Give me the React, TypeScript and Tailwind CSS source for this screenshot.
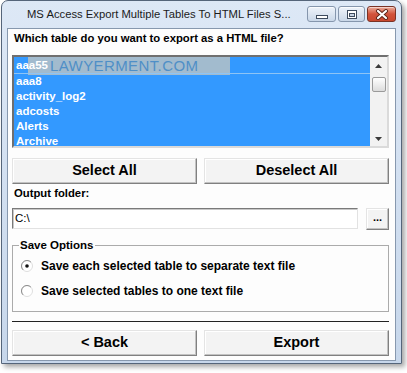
import clsx from 'clsx';

const tables = ['aaa55', 'aaa8', 'activity_log2', 'adcosts', 'Alerts', 'Archive'];

function CaptionButton({ kind }: { kind: 'min' | 'max' | 'close' }) {
  if (kind === 'close') {
    return (
      <div className="flex h-[16px] w-[29px] items-center justify-center rounded-[3px] border border-[#7a3326] bg-gradient-to-b from-[#e9ab9a] via-[#d2533b] to-[#c8482f] shadow-[inset_0_1px_0_rgba(255,255,255,0.5)]">
        <svg width="14" height="11" viewBox="0 0 14 11">
          <path d="M3 2 L11 9 M11 2 L3 9" stroke="#5a2418" strokeWidth="4" strokeLinecap="round" />
          <path d="M3 2 L11 9 M11 2 L3 9" stroke="#ffffff" strokeWidth="2.2" strokeLinecap="round" />
        </svg>
      </div>
    );
  }
  return (
    <div
      className={clsx(
        'flex h-[16px] items-center justify-center rounded-[3px] border border-[#8596ad] bg-gradient-to-b from-[#eef3fa] to-[#c9d7e8] shadow-[inset_0_1px_0_rgba(255,255,255,0.7)]',
        kind === 'min' ? 'w-[29px]' : 'w-[27px]',
      )}
    >
      {kind === 'min' ? (
        <svg width="14" height="12" viewBox="0 0 14 12">
          <rect x="1.5" y="7.5" width="11" height="3" fill="#ffffff" stroke="#3d4b5e" />
        </svg>
      ) : (
        <svg width="12" height="11" viewBox="0 0 12 11">
          <rect x="1.5" y="1.5" width="9" height="8" fill="#ffffff" stroke="#3d4b5e" />
          <rect x="3.5" y="4.5" width="5" height="3" fill="#c6d3e4" stroke="#3d4b5e" />
        </svg>
      )}
    </div>
  );
}

function ClassicButton({ children, className }: { children: React.ReactNode; className?: string }) {
  return (
    <div
      className={clsx(
        'flex items-center justify-center border border-t-[#e4e4e4] border-l-[#e4e4e4] border-r-[#808080] border-b-[#808080] bg-[#f3f3f3] font-bold text-black shadow-[inset_-1px_-1px_0_#c2c2c2,inset_1px_1px_0_#ffffff]',
        className,
      )}
    >
      {children}
    </div>
  );
}

function Radio({ checked }: { checked?: boolean }) {
  return (
    <svg width="12" height="12" viewBox="0 0 12 12">
      <circle cx="6" cy="6" r="5.5" fill="#ffffff" stroke="#dedede" />
      <path d="M2.1 9.9 A5.5 5.5 0 0 1 9.9 2.1" fill="none" stroke="#8c8c8c" />
      {checked && <circle cx="6" cy="6" r="1.8" fill="#111111" />}
    </svg>
  );
}

function Arrow({ up }: { up?: boolean }) {
  return (
    <svg width="7" height="4" viewBox="0 0 7 4">
      <path d={up ? 'M0 4 L3.5 0 L7 4 Z' : 'M0 0 L3.5 4 L7 0 Z'} fill="#3a3a3a" />
    </svg>
  );
}

export default function App() {
  return (
    <div className="h-[373px] w-[407px] overflow-hidden bg-white font-['Liberation_Sans',Arial,sans-serif]">
      <div className="ml-px flex h-[364px] w-[401px] flex-col rounded-t-[7px] border border-[#55657a] bg-gradient-to-b from-[#dde8f6] to-[#c7d7eb] shadow-[3px_3px_5px_rgba(0,0,0,0.35)]">
        {/* title bar */}
        <div className="flex h-[27px] shrink-0 items-start">
          <div className="flex h-[27px] flex-1 items-center pl-[25px] text-[11.25px] text-[#1b1b1b]">
            MS Access Export Multiple Tables To HTML Files S...
          </div>
          <div className="mt-[5px] mr-[5px] flex gap-[2px]">
            <CaptionButton kind="min" />
            <CaptionButton kind="max" />
            <CaptionButton kind="close" />
          </div>
        </div>

        {/* client area */}
        <div className="mx-[5px] mb-[2px] flex h-[333px] flex-col border border-[#8798ae] bg-[#fdfdfd] pl-[4px]">
          <div className="h-[18px] pl-[2px] text-[11.3px] leading-[18px] font-bold text-black">
            Which table do you want to export as a HTML file?
          </div>

          {/* list box */}
          <div className="relative mt-[8px] flex h-[93px] w-[377px] border-2 border-t-[#6f6f6f] border-l-[#6f6f6f] border-r-[#dadada] border-b-[#dadada] bg-[#3399ff]">
            <div className="absolute top-[0px] left-[14px] flex h-[18px] w-[202px] items-center bg-[#a2bbce] pl-[22px] text-[15px] tracking-[0.4px] text-[#4f8fc7]">
              LAWYERMENT.COM
            </div>
            <div className="relative flex-1 overflow-hidden">
              {tables.map((t, i) => (
                <div
                  key={t}
                  className={clsx(
                    'pl-[2px] text-[11.5px] font-bold text-white',
                    i === 0 ? 'h-[17px] border-b border-[#8ec4f5] leading-[16px]' : 'h-[15px] leading-[15px]',
                  )}
                >
                  {t}
                </div>
              ))}
            </div>
            <div className="flex w-[17px] flex-col items-center bg-[#f2f2f2]">
              <div className="flex h-[17px] w-full items-center justify-center">
                <Arrow up />
              </div>
              <div className="mt-[3px] h-[15px] w-[14px] rounded-[2px] border border-[#9a9a9a] bg-gradient-to-b from-[#ffffff] to-[#dcdcdc]" />
              <div className="flex-1" />
              <div className="flex h-[15px] w-full items-center justify-center">
                <Arrow />
              </div>
            </div>
          </div>

          <div className="mt-[10px] flex w-[377px] gap-[7px]">
            <ClassicButton className="h-[26px] flex-1 text-[14.5px]">Select All</ClassicButton>
            <ClassicButton className="h-[26px] flex-1 text-[14.5px]">Deselect All</ClassicButton>
          </div>

          <div className="mt-[2px] h-[15px] pl-[2px] text-[11.3px] leading-[15px] font-bold text-black">
            Output folder:
          </div>

          <div className="mt-[7px] flex w-[377px] items-start gap-[8px]">
            <div className="flex h-[21px] w-[346px] items-center border border-t-[#7a7a7a] border-l-[#7a7a7a] border-r-[#e2e2e2] border-b-[#e2e2e2] bg-white pl-[2px] text-[11.5px] text-black shadow-[inset_1px_1px_0_#c8c8c8]">
              C:\
            </div>
            <ClassicButton className="h-[22px] w-[23px] pb-[4px] text-[11px]">...</ClassicButton>
          </div>

          {/* save options group */}
          <div className="relative mt-[15px] h-[67px] w-[377px] border border-[#ababab] pt-[10px] pl-[8px]">
            <div className="absolute top-[-8px] left-[6px] bg-[#fdfdfd] px-[1px] text-[11.5px] leading-[15px] font-bold text-black">
              Save Options
            </div>
            <div className="flex h-[20px] items-center gap-[8px] text-[12px] font-bold text-black">
              <Radio checked />
              <span>Save each selected table to separate text file</span>
            </div>
            <div className="mt-[5px] flex h-[20px] items-center gap-[8px] text-[12px] font-bold text-black">
              <Radio />
              <span>Save selected tables to one text file</span>
            </div>
          </div>

          <div className="mt-[9px] h-px w-[377px] bg-[#222222]" />

          <div className="mt-[8px] flex w-[377px] gap-[7px]">
            <ClassicButton className="h-[26px] flex-1 text-[14.5px]">&lt; Back</ClassicButton>
            <ClassicButton className="h-[26px] flex-1 text-[14.5px]">Export</ClassicButton>
          </div>
        </div>
      </div>
    </div>
  );
}
